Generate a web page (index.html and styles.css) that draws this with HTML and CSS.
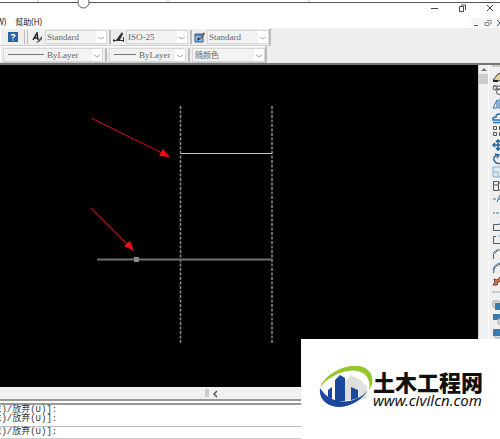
FILE: index.html
```
<!DOCTYPE html>
<html lang="zh">
<head>
<meta charset="utf-8">
<title>CAD</title>
<link rel="stylesheet" href="styles.css">
</head>
<body>
<div class="app">
  <header class="titlebar">
    <svg class="guide" width="100%" height="9" aria-hidden="true"><path d="M38 0v2M168 0v2M309 0v2" stroke="#bbb"/><path d="M0 2.500H3000" stroke="#555"/><circle cx="83.500" cy="2.500" r="5.500" fill="#fff" stroke="#555"/></svg>
    <nav class="menu"><a href="#">(W)</a><a href="#">幫助(H)</a></nav>
    <div class="controls">
      <div class="window-buttons">
        <button aria-label="Minimize"><svg width="8" height="8"><path d="M1 4.500h7" stroke="#444"/></svg></button>
        <button aria-label="Restore"><svg width="8" height="8"><path d="M1.500 2.500h4v5h-4zM3 1h4.500v5" fill="none" stroke="#444"/></svg></button>
        <button aria-label="Close"><svg width="8" height="8"><path d="M1 1l6 6M7 1L1 7" stroke="#444"/></svg></button>
      </div>
      <div class="document-buttons">
        <button aria-label="Minimize drawing"><svg width="8" height="8"><path d="M2 6.500h4" stroke="#666"/></svg></button>
        <button aria-label="Restore drawing"><svg width="8" height="8"><path d="M1 3.500h4v3H1zM3 1.500h4v4" fill="none" stroke="#888"/></svg></button>
        <button aria-label="Close drawing"><svg width="8" height="8"><path d="M1 1l6 6M7 1L1 7" stroke="#456"/></svg></button>
      </div>
    </div>
  </header>

  <div class="toolbars">
    <div class="toolbar styles-bar">
      <button class="tool help" aria-label="Help"><svg width="11" height="11"><rect x="1" y="0" width="10" height="10" fill="#2865a4"/><path d="M4 3.500q2-2 4 0q0 1-2 2v1M6 7.500v1" fill="none" stroke="#fff" stroke-width="1.200"/></svg></button>
      <i class="grip"></i>
      <button class="tool" aria-label="Text style"><svg width="11" height="11"><path d="M1 8L5 1l1 7M2 6h4" fill="none" stroke="#222" stroke-width="1.500"/><path d="M4 11l6-7v3l-3 3z" fill="#555"/></svg></button>
      <label class="combo"><select aria-label="Text style"><option>Standard</option></select><svg class="chevron" width="10" height="12"><path d="M2 6l3 2 3-2" fill="none" stroke="#aaa"/></svg></label>
      <i class="divider"></i>
      <button class="tool" aria-label="Dimension style"><svg width="12" height="11"><path d="M0 8.500h11M1 7v3M10.500 5v5" stroke="#333"/><path d="M3 8l6-8 1 2-3 6z" fill="#333"/></svg></button>
      <label class="combo"><select aria-label="Dimension style"><option>ISO-25</option></select><svg class="chevron" width="10" height="12"><path d="M2 6l3 2 3-2" fill="none" stroke="#aaa"/></svg></label>
      <i class="divider"></i>
      <button class="tool" aria-label="Table style"><svg width="12" height="11"><path d="M1 2h8v8H1z" fill="#9cbddd" stroke="#245b91"/><path d="M1 3h8" stroke="#477eb0" stroke-width="2"/><path d="M3 9l1-4 3 2z" fill="#183d63"/><path d="M6 6l4-6 1 2-4 5z" fill="#7b5a50"/></svg></button>
      <label class="combo"><select aria-label="Table style"><option>Standard</option></select><svg class="chevron" width="10" height="12"><path d="M2 6l3 2 3-2" fill="none" stroke="#aaa"/></svg></label>
    </div>
    <div class="toolbar properties-bar">
      <label class="combo linetype"><i class="line-sample"></i><select aria-label="Linetype"><option>ByLayer</option></select><svg class="chevron" width="10" height="12"><path d="M2 6l3 2 3-2" fill="none" stroke="#aaa"/></svg></label>
      <i class="divider"></i>
      <label class="combo lineweight"><i class="line-sample"></i><select aria-label="Lineweight"><option>ByLayer</option></select><svg class="chevron" width="10" height="12"><path d="M2 6l3 2 3-2" fill="none" stroke="#aaa"/></svg></label>
      <i class="divider"></i>
      <label class="combo color"><select aria-label="Plot style"><option>随颜色</option></select><svg class="chevron" width="10" height="12"><path d="M2 6l3 2 3-2" fill="none" stroke="#aaa"/></svg></label>
    </div>
  </div>

  <main class="workspace">
    <svg class="drawing" aria-label="Drawing">
      <g fill="none" stroke="#8d8d8d">
        <path d="M180.500 41V278M272 41V278" stroke-width="1.500" stroke-dasharray="3 1.500"/>
        <path d="M181 88.500H272" stroke="#c4c4c4"/>
        <path d="M97 194.500H272" stroke="#707070" stroke-width="2"/>
      </g>
      <rect x="134" y="192" width="5" height="5" fill="#888"/>
      <g stroke="#b20d12" stroke-width="1.200"><path d="M91 53L162 88M91 143L129 181"/></g>
      <path d="M170 92L159 91 163 84zM134 186L124 181 130 176z" fill="#f10d10"/>
    </svg>
    <div class="vscroll"><svg width="9" height="9"><path d="M2 6l3-3 3 3z" fill="#777"/></svg><i class="vthumb"></i></div>
    <aside class="palette">
      <div class="modify-tools">
        <button aria-label="Erase"><svg width="12" height="12"><path d="M1 9l5-6 5-2v5l-4 4z" fill="#ddd494" stroke="#444"/><path d="M1 10h5" stroke="#222" stroke-width="2"/></svg></button>
        <button aria-label="Copy"><svg width="12" height="12"><path d="M1 2h10M3 5h9"/><circle cx="3" cy="4" r="2"/><circle cx="7" cy="8" r="2.500"/></svg></button>
        <button aria-label="Mirror"><svg width="12" height="12"><path d="M1 10l4-8v8zM7 1v10M9 2l3 8H9z" stroke="#266dab"/></svg></button>
        <button aria-label="Offset"><svg width="12" height="12"><path d="M1 7q0-2 3-2 0-3 3-3t3 3v3H1zM1 10.500h11" stroke="#2772b2" stroke-width="1.500"/></svg></button>
        <button aria-label="Array"><svg width="12" height="12"><path d="M1.500 1.500h3v3h-3zM7.500 1.500h3v3h-3zM1.500 7.500h3v3h-3zM7.500 7.500h3v3h-3z"/></svg></button>
        <button aria-label="Move"><svg width="12" height="12"><path d="M6 1v10M1 6h10M4 3l2-2 2 2M3 4L1 6l2 2M4 9l2 2 2-2" stroke="#1e64a2" stroke-width="1.500"/></svg></button>
        <button aria-label="Rotate"><svg width="12" height="12"><path d="M6 2Q1 3 2 7q2 5 7 3 3-2 2-5M3 1l4 1-2 3" stroke="#2b6aa5" stroke-width="1.500"/></svg></button>
        <button aria-label="Scale"><svg width="12" height="12"><path d="M1 1h10v10H1zM1 6h5v5" fill="#dce9f1" stroke="#8cb1cc"/></svg></button>
        <button aria-label="Stretch"><svg width="12" height="12"><path d="M1.500 1.500h5v9h-5zM1 5h5M7 2l5 8H7"/></svg></button>
        <button aria-label="Trim"><svg width="12" height="12"><path d="M1 6h3M6 6h5M5 9l3-7" stroke="#3677a7"/></svg></button>
        <button aria-label="Extend"><svg width="12" height="12"><path d="M1 6h2M4 6h3M9 1v9" stroke="#3677a7"/></svg></button>
        <button aria-label="Break at point"><svg width="12" height="12"><path d="M1.500 3.500h9v6h-9z"/><path d="M6 3h3" stroke="#62a7d6"/></svg></button>
        <button aria-label="Break"><svg width="12" height="12"><path d="M4 2.500H1.500v7h8v-6"/><path d="M6 2h4" stroke="#62a7d6"/></svg></button>
        <button aria-label="Chamfer"><svg width="12" height="12"><path d="M1.500 11V6l5-4h6"/><path d="M1 5l5-4" stroke="#3e8ac0"/></svg></button>
        <button aria-label="Fillet"><svg width="12" height="12"><path d="M1.500 11Q1.500 2 11 2"/><path d="M1 8q1-6 7-7" stroke="#3e8ac0"/></svg></button>
        <button aria-label="Explode"><svg width="12" height="12"><path d="M1 10l2-3-1-3 3 1 3-3 3-1-2 5-3 1-1 3z" fill="#cf774f" stroke="#8c3820"/></svg></button>
      </div>
      <div class="order-tools">
        <button aria-label="Bring to front"><svg width="12" height="12"><path d="M1 1h6v6H1z" fill="#ddd" stroke="#aaa"/><rect x="3" y="3" width="9" height="7" fill="#367bb2" stroke="none"/></svg></button>
        <button aria-label="Send to back"><svg width="12" height="12"><rect x="1" y="1" width="7" height="6" fill="#367bb2" stroke="none"/><path d="M6 6h5v5H6z" fill="#ddd" stroke="#aaa"/></svg></button>
        <button aria-label="Bring above"><svg width="12" height="12"><path d="M3 5h8v6H3z" fill="#ddd" stroke="#aaa"/><rect x="1" y="2" width="10" height="7" fill="#367bb2" stroke="none"/></svg></button>
        <button aria-label="Send under"><svg width="12" height="12"><rect x="2" y="2" width="9" height="7" fill="#76a3c9" stroke="none"/></svg></button>
      </div>
    </aside>
  </main>

  <footer class="bottom">
    <div class="hscroll"><i class="hthumb"></i><svg width="7" height="9"><path d="M6 2L3 5l3 3" fill="none" stroke="#555" stroke-width="1.500"/></svg></div>
    <div class="command">
      <div class="history"><p>E)/放弃(U)]:</p><p>E)/放弃(U)]:</p></div>
      <label class="prompt">E)/放弃(U)]:<input aria-label="Command"></label>
    </div>
  </footer>

  <a class="watermark" href="#">
    <svg class="logo" width="54" height="46" viewBox="0 0 54 46">
      <path d="M26 16l6-7 11 6v19H26z" fill="#dedede"/><path d="M37 21l6-5 5 4v13H37z" fill="#e2e2e2"/>
      <path d="M1 22C-2 45 35 50 51 21C42 37 14 43 1 22z" fill="#1b489c"/>
      <path d="M1 21C10 1 44-8 52 8C55 15 53 20 50 24C54 2 29-2 7 15z" fill="#94c72c"/>
      <path d="M9 24l4-3v12l-4-2zM16 14l5-5 5 3v23H16zM32 21l7 3v8l-7 2z" fill="#1b489c"/>
    </svg>
    <span class="brand"><strong>土木工程网</strong><em>www.civilcn.com</em></span>
  </a>
</div>
</body>
</html>
```
FILE: styles.css
```
* { box-sizing: border-box; }
body { margin: 0; background: #efefef; font-family: "Liberation Sans", "Noto Sans CJK SC", sans-serif; }
button { display: flex; padding: 0; border: 0; background: none; }
a { color: inherit; text-decoration: none; }
svg { display: block; flex: none; }

.app { position: relative; display: flex; flex-direction: column; height: 100vh; overflow: hidden; }

.titlebar { position: relative; display: flex; justify-content: space-between; height: 28px; background: #fff; }
.guide { position: absolute; top: 0; left: 0; }
.menu { display: flex; align-items: flex-end; gap: 9px; margin-left: -6px; font: 8px/12px "Noto Sans", "Noto Sans CJK TC", sans-serif; color: #222; }
.controls { display: flex; flex-direction: column; align-items: flex-end; gap: 6px; padding-top: 4px; overflow: hidden; }
.window-buttons { display: flex; gap: 20px; padding-right: 6px; }
.document-buttons { display: flex; gap: 4px; margin-right: -5px; padding: 1px; background: #f6f6f6; }

.toolbars { border-bottom: 2px solid #777; background: #eee; }
.toolbar { display: flex; align-items: center; width: max-content; height: 18px; border: 1px solid #fff; border-right: 2px solid #bbb; border-bottom-color: #ccc; }
.styles-bar { padding-left: 6px; }
.properties-bar { height: 17px; padding-left: 2px; }
.tool { width: 12px; }
.help { margin-right: 5px; }
.grip { width: 4px; height: 14px; margin-right: 4px; border: solid #bbb; border-width: 0 1px; }
.divider { width: 2px; height: 14px; margin: 0 2px; background: #bbb; }
.combo { position: relative; display: flex; align-items: center; width: 62px; height: 14px; border: 1px solid #d7d7d7; background: #f2f2f2; }
.combo select { flex: 1; min-width: 0; height: 12px; padding: 0 0 0 1px; border: 0; appearance: none; background: none; color: #666; font: 9px/12px "Liberation Serif", serif; }
.combo .chevron { background: #fff; }
.linetype { width: 100px; }
.lineweight { width: 77px; }
.color { width: 73px; }
.color select { padding-left: 2px; font: 8px/12px "Noto Sans CJK SC", sans-serif; }
.styles-bar .combo { margin-left: 1px; }
.line-sample { width: 36px; height: 1px; margin: 0 2px 0 4px; background: #777; }
.lineweight .line-sample { width: 22px; }

.workspace { display: flex; flex: 1; min-height: 0; }
.drawing { flex: 1; min-width: 0; height: 100%; background: #000; }
.vscroll { width: 10px; border-left: 1px solid #ccc; background: #f0f0f0; }
.vthumb { display: block; height: 10px; background: #ccc; }
.palette { width: 12px; padding-left: 3px; overflow: hidden; border-left: 1px solid #fff; }
.palette button { flex: 1; align-items: center; }
.palette svg { fill: none; stroke: #555; }
.modify-tools { display: flex; flex-direction: column; height: 226px; padding: 3px 0; border-top: 2px solid #ccc; }
.order-tools { display: flex; flex-direction: column; height: 62px; padding-top: 6px; border-top: 2px solid #ccc; }

.bottom { background: #eee; }
.hscroll { display: flex; align-items: center; height: 12px; background: #f1f1f1; }
.hthumb { width: 4px; height: 8px; margin: 0 2px 0 205px; background: #ccc; }
.command { border-top: 6px double #999; background: #fff; color: #333; font: 9px/9px "Liberation Mono", "Noto Sans CJK SC", monospace; }
.history { height: 22px; padding-top: 1px; border-bottom: 1px solid #bbb; }
.history p { margin: 0 0 0 -4px; }
.prompt { display: flex; align-items: center; height: 12px; margin-left: -4px; border-bottom: 1px solid #ccc; }
.prompt input { flex: 1; height: 8px; padding: 0; border: 0; outline: 0; font: inherit; }

.watermark { position: absolute; right: 0; bottom: 0; display: flex; align-items: center; height: 100px; padding: 0 18px; background: #fff; color: #111; }
.brand { display: flex; flex-direction: column; width: 109px; white-space: nowrap; }
.brand strong { font: 900 22px/22px "Noto Sans CJK SC", sans-serif; }
.brand em { font: italic 15px/16px "Noto Sans", sans-serif; }
```
